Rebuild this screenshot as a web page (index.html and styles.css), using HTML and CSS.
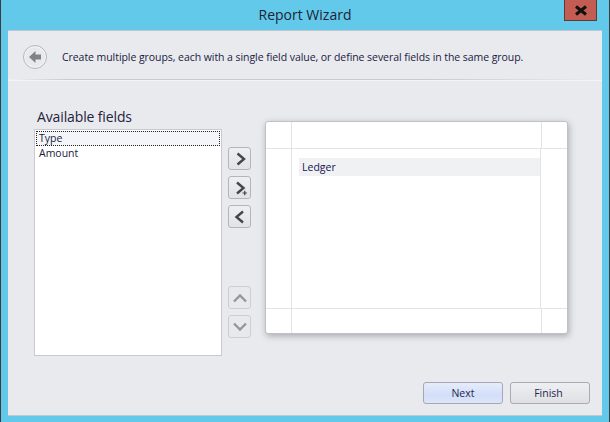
FILE: index.html
```html
<!DOCTYPE html>
<html lang="en">
<head>
<meta charset="utf-8">
<title>Report Wizard</title>
<link rel="stylesheet" href="styles.css">
</head>
<body>
<div class="window">
  <header class="titlebar">
    <h1 class="title">Report Wizard</h1>
    <button class="close" aria-label="Close"><svg width="14" height="11" viewBox="0 0 14 11"><path d="M2 1.5 L12 9.5 M12 1.5 L2 9.5" stroke="#111" stroke-width="3" fill="none"/></svg></button>
  </header>
  <main class="content">
    <div class="head">
      <span class="back"><svg width="14" height="14" viewBox="0 0 14 14"><path d="M7.5 1 L1 7 L7.5 13 V9.5 H13 V4.5 H7.5 Z" fill="#7f8288"/></svg></span>
      <p class="desc">Create multiple groups, each with a single field value, or define several fields in the same group.</p>
    </div>
    <div class="rule"></div>
    <div class="main">
      <section class="fields">
        <h2 class="fields-title">Available fields</h2>
        <ul class="list">
          <li class="item focused">Type</li>
          <li class="item">Amount</li>
        </ul>
      </section>
      <div class="tools">
        <div class="tool-group">
          <button class="tool"><svg width="14" height="14" viewBox="0 0 14 14"><path d="M4.5 1.500 L11 7 L4.500 12.500" fill="none" stroke="#44464a" stroke-width="2.4"/></svg></button>
          <button class="tool"><svg width="20" height="20" viewBox="0 0 20 20"><path d="M7 4.500 L13.500 10 L7 15.500" fill="none" stroke="#44464a" stroke-width="2.4"/><path d="M12.500 15 H17 M14.750 12.750 V17.250" stroke="#44464a" stroke-width="1.200"/></svg></button>
          <button class="tool"><svg width="14" height="14" viewBox="0 0 14 14"><path d="M10 1.500 L3.500 7 L10 12.500" fill="none" stroke="#44464a" stroke-width="2.4"/></svg></button>
        </div>
        <div class="tool-group">
          <button class="tool dim"><svg width="16" height="12" viewBox="0 0 16 12"><path d="M2 9.500 L8 3.500 L14 9.500" fill="none" stroke="#94979c" stroke-width="2.400"/></svg></button>
          <button class="tool dim"><svg width="16" height="12" viewBox="0 0 16 12"><path d="M2 2.500 L8 8.500 L14 2.500" fill="none" stroke="#94979c" stroke-width="2.400"/></svg></button>
        </div>
      </div>
      <section class="sheet">
        <div class="band top"></div>
        <div class="body">
          <div class="gutter"></div>
          <div class="middle"><div class="ledger">Ledger</div></div>
          <div class="gutter right"></div>
        </div>
        <div class="band bottom"></div>
      </section>
    </div>
    <footer class="footer">
      <button class="btn primary">Next</button>
      <button class="btn">Finish</button>
    </footer>
  </main>
</div>
</body>
</html>
```

FILE: styles.css
```css
* { box-sizing: border-box; }
html, body { margin: 0; padding: 0; }
body { width: 610px; height: 422px; overflow: hidden; font-family: "Open Sans", "Noto Sans", sans-serif; color: #1e1e3c; }
.window { width: 610px; height: 422px; display: flex; flex-direction: column; background: #63c9eb; border-left: 1px solid #3c3c3c; border-right: 1px solid #3c3c3c; padding: 0 7px 6px; }
.titlebar { height: 30px; flex: none; display: flex; justify-content: center; align-items: center; position: relative; }
.title { margin: 0; font-size: 14px; font-weight: 400; color: #1c2433; line-height: 30px; }
.close { position: absolute; top: 0; right: 5px; width: 33px; height: 21px; padding: 0; border: 1px solid #5d3a3a; border-top: 0; background: #c35c52; display: flex; align-items: center; justify-content: center; }
.content { flex: 1; display: flex; flex-direction: column; background: #e9eaee; border: 1px solid #bcc9d2; border-width: 1px 0 1px 0; min-height: 0; }
.head { height: 48px; flex: none; display: flex; align-items: center; padding: 3px 0 0 15px; gap: 15px; }
.back { width: 24px; height: 24px; border-radius: 50%; border: 1px solid #b4b6bc; box-shadow: inset 0 0 0 1px #f5f6f8; background: #e8e9ed; display: flex; align-items: center; justify-content: center; }
.desc { margin: 0; font-size: 10.5px; letter-spacing: -0.06px; white-space: nowrap; color: #1a1a42; }
.rule { height: 2px; flex: none; background: linear-gradient(to right, #f0f1f3, #c9cace 10%, #c9cace 70%, #eaebee); border-bottom: 1px solid #f3f4f6; }
.main { flex: none; height: 286px; display: flex; padding: 0 0 0 26px; }
.fields { width: 188px; flex: none; display: flex; flex-direction: column; }
.fields-title { margin: 25px 0 0 3px; font-size: 14px; letter-spacing: -0.13px; font-weight: 400; line-height: 22px; color: #23233c; }
.list { list-style: none; margin: 1px 0 0; padding: 1px; width: 188px; height: 227px; background: #fff; border: 1px solid #c9cad1; }
.item { height: 15px; line-height: 14px; font-size: 10.5px; padding-left: 3px; color: #1a1a3c; }
.focused { border: 1px dotted #222; background: #f4f5f8; line-height: 12px; padding-left: 2px; }
.tools { width: 23px; flex: none; margin: 66px 0 0 6px; display: flex; flex-direction: column; justify-content: flex-start; gap: 58px; }
.tool-group { display: flex; flex-direction: column; gap: 6px; }
.tool { width: 23px; height: 23px; padding: 0; border: 1px solid #b3b5bb; border-radius: 3px; background: linear-gradient(#eeeff2, #e2e3e7); display: flex; align-items: center; justify-content: center; }
.tool.dim { border-color: #cdced3; background: #e8e9ed; }
.sheet { width: 303px; height: 213px; flex: none; margin: 40px 0 0 14px; background: #fff; border: 1px solid #c0c1c6; border-radius: 3px; box-shadow: 1px 2px 6px rgba(90, 92, 100, 0.45); display: flex; flex-direction: column; }
.band { height: 27px; flex: none; border-bottom: 1px solid #e2e3e5; background: linear-gradient(to right, transparent 25px, #e2e3e5 25px, #e2e3e5 26px, transparent 26px, transparent 275px, #e2e3e5 275px, #e2e3e5 276px, transparent 276px); }
.band.bottom { height: 25px; border-bottom: 0; border-top: 1px solid #e2e3e5; }
.body { flex: 1; display: flex; min-height: 0; }
.gutter { width: 26px; flex: none; border-right: 1px solid #e2e3e5; }
.gutter.right { width: 27px; border-right: 0; border-left: 1px solid #e2e3e5; }
.middle { flex: 1; padding-top: 9px; padding-left: 7px; }
.ledger { height: 18px; line-height: 18px; font-size: 10.5px; background: #f0f1f3; padding-left: 3px; color: #14144e; }
.footer { flex: 1; display: flex; justify-content: flex-end; align-items: flex-start; gap: 7px; padding: 15px 12px 0 0; }
.btn { width: 80px; height: 22px; padding: 0 3px 0 0; font-family: inherit; font-size: 10.5px; color: #26264a; border: 1px solid #a9abb2; border-radius: 3px; background: linear-gradient(#eeeff2, #dfe0e4); }
.btn.primary { padding: 0; background: linear-gradient(#e6ecfb, #d3def9 60%, #dde5fa); border-color: #a5a8b4; }
```
